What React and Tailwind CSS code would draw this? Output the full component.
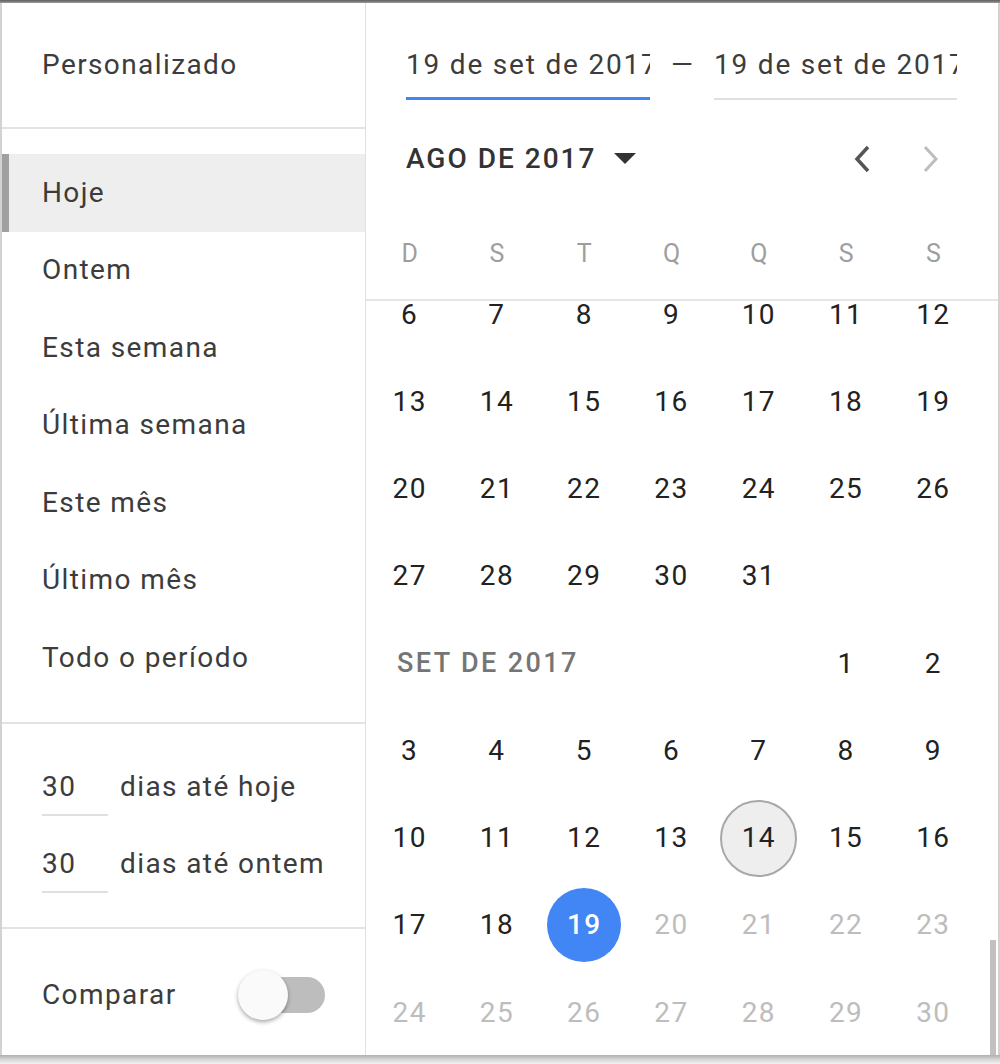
const presets = ["Hoje", "Ontem", "Esta semana", "Última semana", "Este mês", "Último mês", "Todo o período"];
const weekdays = ["D", "S", "T", "Q", "Q", "S", "S"];

const augRows = [
  [6, 7, 8, 9, 10, 11, 12],
  [13, 14, 15, 16, 17, 18, 19],
  [20, 21, 22, 23, 24, 25, 26],
  [27, 28, 29, 30, 31, null, null],
];
const setRows = [
  [3, 4, 5, 6, 7, 8, 9],
  [10, 11, 12, 13, 14, 15, 16],
  [17, 18, 19, 20, 21, 22, 23],
  [24, 25, 26, 27, 28, 29, 30],
];

export default function App() {
  return (
    <div className="w-[1000px] h-[1064px] bg-white font-['Roboto',sans-serif] tracking-[1.4px] flex flex-col overflow-hidden">
      {/* top edge */}
      <div className="h-[3px] bg-gradient-to-b from-[#5f5f5f] to-[#9a9a9a]" />

      <div className="flex flex-1 border-l-2 border-r-2 border-[#d2d2d2] min-h-0">
        {/* Left column */}
        <div className="w-[364px] border-r border-[#e0e0e0] flex flex-col text-[28px] text-[#3c3c3c]">
          <div className="h-[126px] flex items-center px-[40px] border-b-2 border-[#e3e3e3]">
            Personalizado
          </div>

          <div className="pt-[25px] pb-[25px] border-b-2 border-[#e3e3e3]">
            {presets.map((p, i) =>
              i === 0 ? (
                <div key={p} className="h-[77.5px] flex items-center bg-[#eeeeee] border-l-[7px] border-[#a0a0a0] pl-[33px]">
                  {p}
                </div>
              ) : (
                <div key={p} className="h-[77.5px] flex items-center pl-[40px]">
                  {p}
                </div>
              )
            )}
          </div>

          <div className="h-[205px] pt-[34px] border-b-2 border-[#e3e3e3]">
            <RangeInput label="dias até hoje" />
            <RangeInput label="dias até ontem" />
          </div>

          <div className="flex-1 flex items-center px-[40px] pt-[7px]">
            <span>Comparar</span>
            <div className="relative ml-[61px] w-[90px] h-[50px] flex items-center">
              <div className="absolute right-0 w-[74px] h-[36px] rounded-full bg-[#bdbdbd]" />
              <div className="absolute left-0 w-[50px] h-[50px] rounded-full bg-[#fafafa] shadow-[0_2px_4px_rgba(0,0,0,0.35)]" />
            </div>
          </div>
        </div>

        {/* Right column */}
        <div className="flex-1 flex flex-col min-w-0 relative">
          <div className="h-[126px] flex items-start pl-[40px] pt-[44px] text-[28px] text-[#3c3c3c] tracking-[1.8px]">
            <div className="w-[244px] overflow-hidden whitespace-nowrap border-b-[3px] border-[#4285f4] pb-[14px] leading-[36px]">
              19 de set de 2017
            </div>
            <div className="w-[64px] text-center leading-[36px] tracking-normal">—</div>
            <div className="w-[243px] overflow-hidden whitespace-nowrap border-b-2 border-[#e0e0e0] pb-[15px] leading-[36px]">
              19 de set de 2017
            </div>
          </div>

          <div className="h-[64px] flex items-center pl-[40px] pr-[56px] pb-[4px]">
            <span className="text-[28px] font-medium text-[#333] tracking-[2px]">AGO DE 2017</span>
            <svg className="ml-[18px]" width="22" height="12" viewBox="0 0 22 12">
              <path d="M0 0 L22 0 L11 11 Z" fill="#333" />
            </svg>
            <div className="flex-1" />
            <svg width="24" height="32" viewBox="0 0 24 32">
              <path d="M17 4 L6 16 L17 28" stroke="#555" strokeWidth="3.5" fill="none" />
            </svg>
            <svg className="ml-[43px]" width="24" height="32" viewBox="0 0 24 32">
              <path d="M7 4 L18 16 L7 28" stroke="#bdbdbd" strokeWidth="3" fill="none" />
            </svg>
          </div>

          <div className="grid grid-cols-7 w-[611px] h-[106px] items-center pt-[16px] text-[25px] text-[#9e9e9e] tracking-normal">
            {weekdays.map((d, i) => (
              <div key={i} className="text-center">{d}</div>
            ))}
          </div>

          <div className="flex-1 border-t-2 border-[#e6e6e6] overflow-hidden relative">
            <div className="-mt-[30px] w-[611px] text-[28px] text-[#222] leading-none">
              {augRows.map((r, ri) => (
                <Row key={"a" + ri} days={r} />
              ))}
              <div className="grid grid-cols-7 h-[87.25px] items-center">
                <div className="col-span-5 pl-[31px] font-medium text-[#757575] text-[27px] tracking-[2.4px]">SET DE 2017</div>
                <div className="text-center">1</div>
                <div className="text-center">2</div>
              </div>
              {setRows.map((r, ri) => (
                <Row key={"s" + ri} days={r} sep />
              ))}
            </div>
            <div className="absolute right-[2px] bottom-0 w-[6px] h-[115px] bg-[#c1c1c1]" />
          </div>
        </div>
      </div>

      {/* bottom shadow */}
      <div className="h-[9px] bg-gradient-to-b from-[#b0b0b0] via-[#d6d6d6] to-[#f2f2f2]" />
    </div>
  );
}

function RangeInput({ label }) {
  return (
    <div className="h-[77px] flex items-start pl-[40px] pt-[14px]">
      <div className="w-[66px] border-b-2 border-[#e0e0e0] pb-[12px] leading-[30px]">30</div>
      <div className="ml-[12px] leading-[30px]">{label}</div>
    </div>
  );
}

function Row({ days, sep }) {
  return (
    <div className="grid grid-cols-7 h-[87.25px] items-center">
      {days.map((d, i) => {
        if (d == null) return <div key={i} />;
        const disabled = sep && d > 19;
        const selected = sep && d === 19;
        const today = sep && d === 14;
        return (
          <div key={i} className="flex items-center justify-center">
            {selected ? (
              <div className="w-[74px] h-[74px] rounded-full bg-[#4285f4] text-white font-medium flex items-center justify-center">
                {d}
              </div>
            ) : today ? (
              <div className="w-[77px] h-[77px] rounded-full bg-[#eeeeee] border-2 border-[#a8a8a8] flex items-center justify-center">
                {d}
              </div>
            ) : (
              <span className={disabled ? "text-[#bdbdbd]" : ""}>{d}</span>
            )}
          </div>
        );
      })}
    </div>
  );
}
